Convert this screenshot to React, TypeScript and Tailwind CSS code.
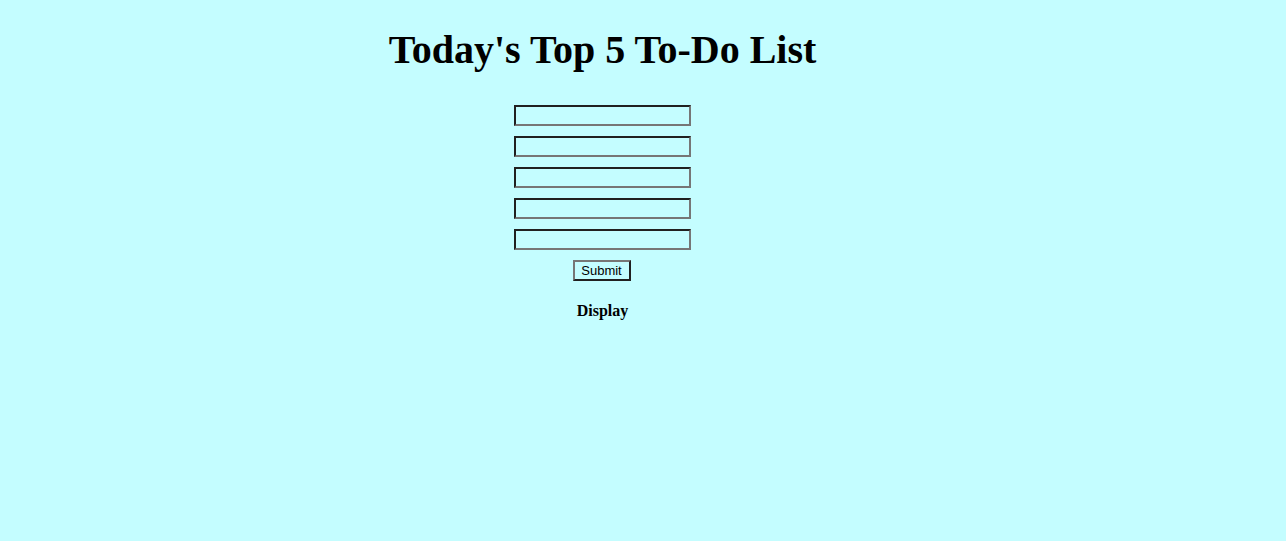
const App = () => {
  return (
    <div className="min-h-screen bg-[#c4fdff] font-['Liberation_Serif',serif] text-black">
      <div className="w-[1205px] flex flex-col items-center">
        <h1 className="mt-[28px] text-[40px] leading-[44px] font-bold">Today's Top 5 To-Do List</h1>

        {/* form with five entries */}
        <form className="mt-[33px] flex flex-col items-center gap-[10px]">
          {[1, 2, 3, 4, 5].map((n) => (
            <input
              key={n}
              type="text"
              className="w-[177px] h-[21px] bg-transparent border-2 border-t-[#202020] border-l-[#202020] border-b-[#767676] border-r-[#767676] px-[2px] text-[13px] font-['Liberation_Sans',sans-serif] outline-none"
            />
          ))}
          <button
            type="button"
            className="ml-[-2px] w-[58px] h-[21px] bg-transparent border-2 border-t-[#767676] border-l-[#767676] border-b-[#202020] border-r-[#202020] text-[13px] leading-none font-['Liberation_Sans',sans-serif]"
          >
            Submit
          </button>
        </form>

        <h4 className="mt-[21px] text-base leading-[18px] font-bold">Display</h4>
      </div>
    </div>
  );
};

export default App;
